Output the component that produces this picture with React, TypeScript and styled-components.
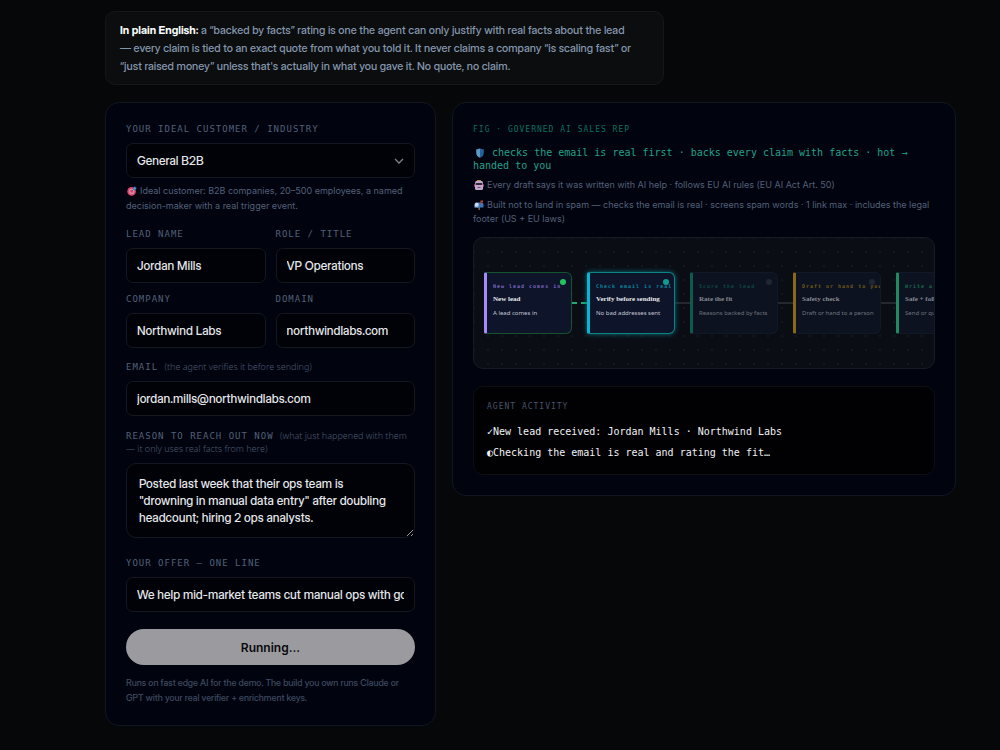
import React from "react";
import styled, { createGlobalStyle, css } from "styled-components";

const SANS = `"Inter Display", "Inter Tight", Roboto, "Liberation Sans", sans-serif`;
const SMALL_SANS = `Inter, "Noto Sans", "Liberation Sans", sans-serif`;
const MONO = `"DejaVu Sans Mono", "Liberation Mono", monospace`;

const GlobalStyle = createGlobalStyle`
  *, *::before, *::after { box-sizing: border-box; }
  html { background: #060708; color-scheme: dark; }
  body { margin: 0; font-family: ${SANS}; color: #e5e7eb; }
  p, h2 { margin: 0; font-weight: inherit; }
`;

const Page = styled.main`
  padding: 11px 44px 24px 105px;
`;

const Note = styled.p`
  max-width: 559px;
  padding: 9px 28px 9px 14px;
  border: 1px solid #15171a;
  border-radius: 10px;
  background: #0b0d0e;
  color: #8496ad;
  font-size: 11px;
  font-weight: 500;
  line-height: 18px;
  strong { color: #f8fafc; font-weight: 700; }
`;

const Columns = styled.div`
  display: grid;
  grid-template-columns: minmax(0, 331fr) minmax(0, 504fr);
  gap: 16px;
  align-items: start;
  margin-top: 17px;
`;

const panel = css`
  padding: 20px;
  border: 1px solid #111620;
  border-radius: 14px;
  background: #01040f;
`;

const FormPanel = styled.form`
  ${panel}
  display: flex;
  flex-direction: column;
`;

const FlowPanel = styled.section`
  ${panel}
`;

const Field = styled.div<{ $gap?: number }>`
  display: flex;
  flex-direction: column;
  gap: 7px;
  min-width: 0;
  margin-top: ${(p) => p.$gap ?? 0}px;
`;

const FieldRow = styled.div<{ $gap: number }>`
  display: grid;
  grid-template-columns: minmax(0, 1fr) minmax(0, 1fr);
  gap: 10px;
  margin-top: ${(p) => p.$gap}px;
`;

const Label = styled.label`
  color: #526078;
  font-family: ${MONO};
  font-size: 9px;
  line-height: 13px;
  letter-spacing: 1px;
  text-transform: uppercase;
`;

const Aside = styled.span`
  color: #4b586f;
  font-family: "Noto Sans", sans-serif;
  font-size: 9px;
  font-weight: 300;
  line-height: 9px;
  letter-spacing: 0;
  text-transform: none;
`;

const control = css`
  width: 100%;
  border: 1px solid #14171d;
  background: #010207;
  color: #e5e7eb;
  font-family: ${SANS};
  font-size: 12px;
  font-weight: 500;
  outline: none;
`;

const Input = styled.input`
  ${control}
  height: 35px;
  padding: 0 10px;
  border-radius: 7px;
`;

const SelectWrap = styled.div`
  display: grid;
  align-items: center;
  > * { grid-area: 1 / 1; }
  svg { justify-self: end; margin-right: 11px; pointer-events: none; }
`;

const Select = styled.select`
  ${control}
  height: 35px;
  padding: 0 30px 0 10px;
  border-radius: 7px;
  appearance: none;
`;

const TextArea = styled.textarea`
  ${control}
  display: block;
  height: 75px;
  padding: 11px 18px 11px 12px;
  border-radius: 10px;
  line-height: 17px;
  resize: vertical;
`;

const Hint = styled.p<{ $gap: number; $dim?: boolean }>`
  margin-top: ${(p) => p.$gap}px;
  padding-right: 8px;
  color: ${(p) => (p.$dim ? "#3e4a60" : "#526078")};
  font-family: ${(p) => (p.$dim ? SANS : SMALL_SANS)};
  font-size: 9px;
  font-weight: ${(p) => (p.$dim ? 500 : 400)};
  line-height: 15px;
`;

const RunButton = styled.button`
  height: 36px;
  margin-top: 17px;
  border: 0;
  border-radius: 18px;
  background: #9b9b9f;
  color: #08090c;
  font-family: ${SMALL_SANS};
  font-size: 12px;
  font-weight: 600;
`;

const FigLabel = styled.h2`
  color: #08705f;
  font-family: ${MONO};
  font-size: 8px;
  line-height: 13px;
  letter-spacing: 1px;
  text-transform: uppercase;
`;

const Promise = styled.p`
  margin-top: 10px;
  color: #23a08a;
  font-family: ${MONO};
  font-size: 10px;
  line-height: 13px;
`;

const Policy = styled.p`
  margin-top: 6px;
  color: #526078;
  font-family: ${SMALL_SANS};
  font-size: 9px;
  line-height: 14px;
`;

const Icon = styled.svg`
  height: 10px;
  margin: 0 3px 0 1px;
  vertical-align: -2px;
`;

const Canvas = styled.div`
  display: flex;
  align-items: center;
  height: 132px;
  margin-top: 11px;
  padding: 0 10px;
  overflow: hidden;
  border: 1px solid #171a22;
  border-radius: 10px;
  background: radial-gradient(circle, #14171f 1px, transparent 1px) 7px 7px / 14px 14px #0b0d15;
`;

const Node = styled.article<{ $accent: string; $outline: string; $glow?: boolean; $waiting?: boolean }>`
  position: relative;
  flex: none;
  width: 88px;
  height: 62px;
  padding: 9px 0 0 6px;
  overflow: hidden;
  border: 1px solid ${(p) => p.$outline};
  border-left: 3px solid ${(p) => p.$accent};
  border-radius: 2px 6px 6px 2px;
  background: ${(p) => (p.$waiting ? "#0c1220" : "#0e1429")};
  box-shadow: ${(p) => (p.$glow ? "0 0 5px #0a6f75" : "none")};
  white-space: nowrap;
`;

const NodeTag = styled.p<{ $color: string }>`
  overflow: hidden;
  color: ${(p) => p.$color};
  font-family: ${MONO};
  font-size: 5px;
  font-weight: 700;
  line-height: 8px;
  letter-spacing: 1px;
`;

const NodeTitle = styled.p<{ $waiting?: boolean }>`
  margin-top: 4px;
  color: ${(p) => (p.$waiting ? "#868991" : "#e5e7eb")};
  font-family: "Liberation Serif", serif;
  font-size: 7px;
  font-weight: 700;
  line-height: 10px;
`;

const NodeText = styled.p<{ $waiting?: boolean }>`
  margin-top: 5px;
  color: ${(p) => (p.$waiting ? "#70747d" : "#c2c6d0")};
  font-family: "Noto Sans", sans-serif;
  font-size: 6px;
  line-height: 8px;
`;

const Dot = styled.span<{ $color: string }>`
  position: absolute;
  top: 6px;
  right: 5px;
  width: 6px;
  height: 6px;
  border-radius: 50%;
  background: ${(p) => p.$color};
`;

const Link = styled.span<{ $live?: boolean }>`
  flex: none;
  width: 15px;
  height: 2px;
  background: ${(p) =>
    p.$live ? "linear-gradient(90deg, #22a876 5px, transparent 5px 9px, #22a876 9px)" : "#25282f"};
`;

const Activity = styled.section`
  margin-top: 17px;
  padding: 13px 13px 14px;
  border: 1px solid #0d0f13;
  border-radius: 10px;
  background: #010103;
`;

const ActivityTitle = styled.h2`
  color: #46546b;
  font-family: ${MONO};
  font-size: 8px;
  line-height: 13px;
  letter-spacing: 1px;
  text-transform: uppercase;
`;

const Log = styled.ul`
  display: flex;
  flex-direction: column;
  gap: 6px;
  margin: 11px 0 0;
  padding: 0;
  list-style: none;
  color: #f0f1f3;
  font-family: ${MONO};
  font-size: 10px;
  line-height: 15px;
`;

const TargetIcon = () => (
  <Icon width="10" viewBox="0 0 10 10" role="img" aria-label="Target">
    <circle cx="4.6" cy="5.4" r="4.3" fill="#d8466c" />
    <circle cx="4.6" cy="5.4" r="2.7" fill="#dd8ba5" />
    <circle cx="4.6" cy="5.4" r="1.4" fill="#d8466c" />
    <path d="M4.6 5.4L8 2" stroke="#3f6f9c" strokeWidth="1" />
    <path d="M6.4 3.6V1.8L8 .3l.5 1.3 1.3.4-1.5 1.7z" fill="#3f95d6" />
  </Icon>
);

const ShieldIcon = () => (
  <Icon width="15" viewBox="0 0 15 10" role="img" aria-label="Shield">
    <path d="M6 .2C4.900 1 3.600 1.200 2.200 1.200v3.500C2.200 7.200 3.800 9 6 9.800z" fill="#5b9ac4" />
    <path d="M6 .2C7.100 1 8.400 1.200 9.800 1.200v3.500C9.800 7.200 8.200 9 6 9.800z" fill="#27609b" />
  </Icon>
);

const RobotIcon = () => (
  <Icon width="10" viewBox="0 0 10 10" role="img" aria-label="Robot">
    <path d="M3 0h4v1.200H3z" fill="#c28a3c" />
    <rect x="0" y="4" width="10" height="3" rx="1" fill="#b8385c" />
    <rect x="1" y="1" width="8" height="9" rx="1.500" fill="#bfa6c8" />
    <rect x="1.500" y="3" width="7" height="2" rx="1" fill="#33263f" />
    <rect x="3.500" y="7" width="3" height="1" fill="#6b4c7c" />
  </Icon>
);

const MailboxIcon = () => (
  <Icon width="10" viewBox="0 0 10 10" role="img" aria-label="Mailbox">
    <path d="M4.500 7h1.400v3H4.500z" fill="#8a6a58" />
    <path d="M2.500 2.500h5A2 2 0 0 1 9.500 4.500V7.500h-7z" fill="#3b78bd" />
    <path d="M.5 4.500a2 2 0 0 1 4 0v3h-4z" fill="#8db6dc" />
    <path d="M1 3.800l3.400-1v3L1 6.500z" fill="#d5dae4" />
    <path d="M6.500 4.500V.5h2.500v1.700H7.300v2.300z" fill="#cf4436" />
  </Icon>
);

const steps = [
  { tag: "New lead comes in", title: "New lead", text: "A lead comes in", accent: "#a78bfa", color: "#7c66c4", outline: "#14532d", dot: "#22c55e", state: "done" },
  { tag: "Check email is real", title: "Verify before sending", text: "No bad addresses sent", accent: "#06b6d4", color: "#0788a0", outline: "#0d8487", dot: "#0f9d90", state: "active" },
  { tag: "Score the lead", title: "Rate the fit", text: "Reasons backed by facts", accent: "#0f594f", color: "#0c4a44", outline: "#111827", dot: "#1f2735", state: "waiting" },
  { tag: "Draft or hand to you", title: "Safety check", text: "Draft or hand to a person", accent: "#8a6914", color: "#735a15", outline: "#111827", dot: "#1f2735", state: "waiting" },
  { tag: "Write a note", title: "Safe + follow-up", text: "Send or queue it", accent: "#1f8a60", color: "#176a4b", outline: "#111827", dot: "#1f2735", state: "waiting" },
];

export default function App() {
  return (
    <>
      <GlobalStyle />
      <Page>
        <Note>
          <strong>In plain English:</strong> a “backed by facts” rating is one the agent can only justify with real facts
          about the lead — every claim is tied to an exact quote from what you told it. It never claims a company “is
          scaling fast” or “just raised money” unless that's actually in what you gave it. No quote, no claim.
        </Note>
        <Columns>
          <FormPanel onSubmit={(e) => e.preventDefault()}>
            <Field>
              <Label htmlFor="industry">Your ideal customer / industry</Label>
              <SelectWrap>
                <Select id="industry" defaultValue="General B2B">
                  <option>General B2B</option>
                </Select>
                <svg width="10" height="10" viewBox="0 0 10 10" fill="none" stroke="#7b8290" strokeWidth="1.3" aria-hidden="true">
                  <path d="M1 3l4 4 4-4" />
                </svg>
              </SelectWrap>
            </Field>
            <Hint $gap={5}>
              <TargetIcon />Ideal customer: B2B companies, 20–500 employees, a named decision-maker with a real trigger event.
            </Hint>
            <FieldRow $gap={15}>
              <Field>
                <Label htmlFor="lead">Lead name</Label>
                <Input id="lead" defaultValue="Jordan Mills" />
              </Field>
              <Field>
                <Label htmlFor="role">Role / title</Label>
                <Input id="role" defaultValue="VP Operations" />
              </Field>
            </FieldRow>
            <FieldRow $gap={10}>
              <Field>
                <Label htmlFor="company">Company</Label>
                <Input id="company" defaultValue="Northwind Labs" />
              </Field>
              <Field>
                <Label htmlFor="domain">Domain</Label>
                <Input id="domain" defaultValue="northwindlabs.com" />
              </Field>
            </FieldRow>
            <Field $gap={13}>
              <Label htmlFor="email">
                Email <Aside>(the agent verifies it before sending)</Aside>
              </Label>
              <Input id="email" defaultValue="jordan.mills@northwindlabs.com" />
            </Field>
            <Field $gap={14}>
              <Label htmlFor="reason">
                Reason to reach out now <Aside>(what just happened with them — it only uses real facts from here)</Aside>
              </Label>
              <TextArea
                id="reason"
                defaultValue={'Posted last week that their ops team is "drowning in manual data entry" after doubling headcount; hiring 2 ops analysts.'}
              />
            </Field>
            <Field $gap={19}>
              <Label htmlFor="offer">Your offer — one line</Label>
              <Input id="offer" defaultValue="We help mid-market teams cut manual ops with governed AI agents" />
            </Field>
            <RunButton type="submit">Running...</RunButton>
            <Hint $gap={10} $dim>
              Runs on fast edge AI for the demo. The build you own runs Claude or GPT with your real verifier + enrichment
              keys.
            </Hint>
          </FormPanel>

          <FlowPanel>
            <FigLabel>Fig · Governed AI sales rep</FigLabel>
            <Promise><ShieldIcon />checks the email is real first · backs every claim with facts · hot → handed to you</Promise>
            <Policy><RobotIcon />Every draft says it was written with AI help · follows EU AI rules (EU AI Act Art. 50)</Policy>
            <Policy>
              <MailboxIcon />Built not to land in spam — checks the email is real · screens spam words · 1 link max · includes the legal
              footer (US + EU laws)
            </Policy>
            <Canvas>
              {steps.map((s, i) => (
                <React.Fragment key={s.tag}>
                  {i > 0 && <Link $live={i === 1} />}
                  <Node $accent={s.accent} $outline={s.outline} $glow={s.state === "active"} $waiting={s.state === "waiting"}>
                    <Dot $color={s.dot} />
                    <NodeTag $color={s.color}>{s.tag}</NodeTag>
                    <NodeTitle $waiting={s.state === "waiting"}>{s.title}</NodeTitle>
                    <NodeText $waiting={s.state === "waiting"}>{s.text}</NodeText>
                  </Node>
                </React.Fragment>
              ))}
            </Canvas>
            <Activity>
              <ActivityTitle>Agent activity</ActivityTitle>
              <Log>
                <li>✓New lead received: Jordan Mills · Northwind Labs</li>
                <li>◐Checking the email is real and rating the fit…</li>
              </Log>
            </Activity>
          </FlowPanel>
        </Columns>
      </Page>
    </>
  );
}
